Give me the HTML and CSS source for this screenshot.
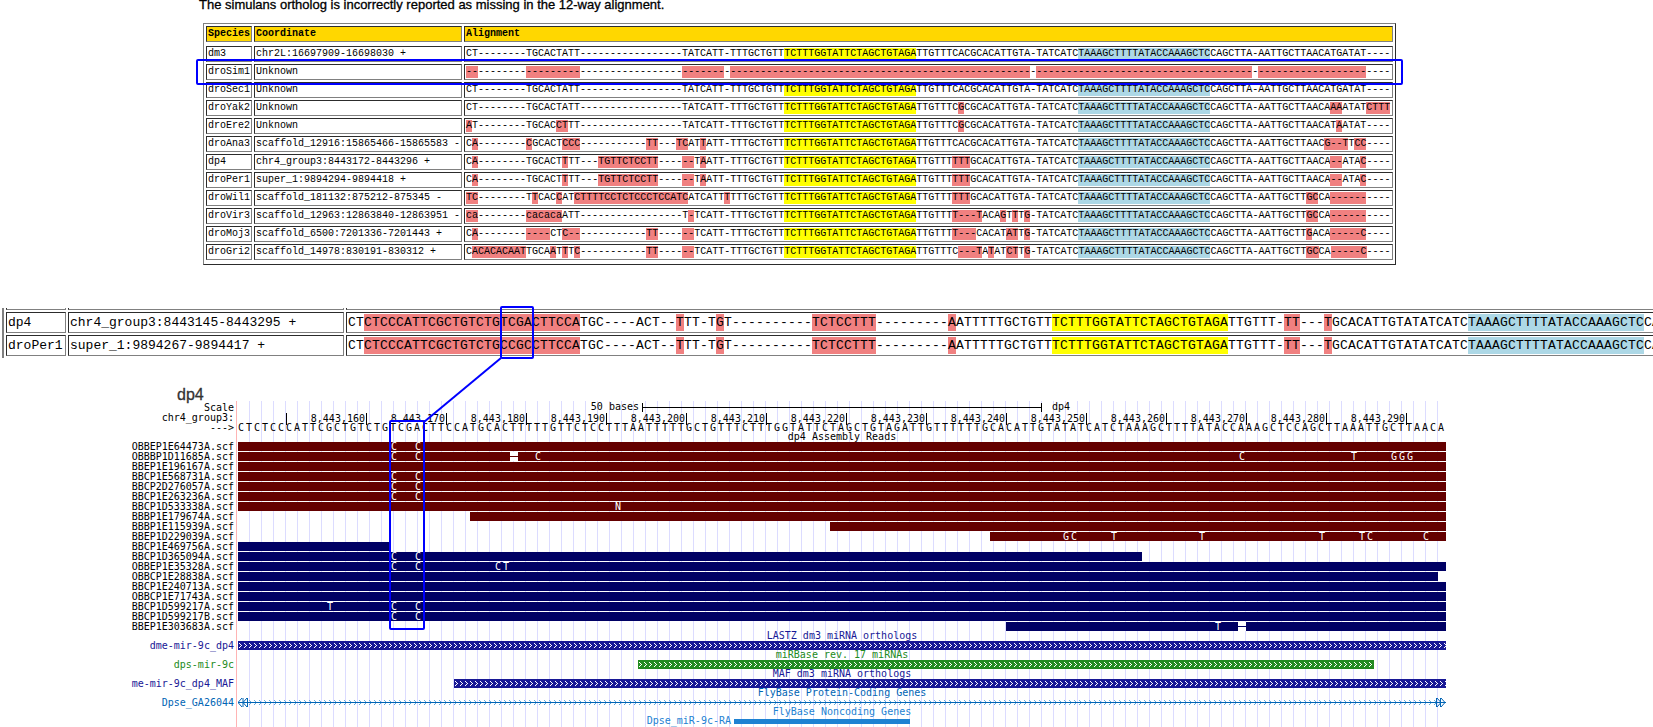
FILE: index.html
```html
<!DOCTYPE html>
<html lang="en">
<head>
    <meta charset="UTF-8">
    <meta name="viewport" content="width=device-width, initial-scale=1.0">
    <title>mir-9c alignment</title>
    <link rel="stylesheet" href="styles.css">
</head>
<body>
    <main class="figure">
        <p class="note">The simulans ortholog is incorrectly reported as missing in the 12-way alignment.</p>

        <table class="alignment">
            <thead>
                <tr><th>Species</th><th>Coordinate</th><th>Alignment</th></tr>
            </thead>
            <tbody id="alignmentRows"></tbody>
        </table>

        <div class="closeup">
            <table class="closeup-table">
                <tbody id="closeupRows">
                    <tr class="cut"><td></td><td></td><td></td></tr>
                </tbody>
            </table>
        </div>

        <h2 class="assembly">dp4</h2>
        <section class="browser" id="browser"></section>

        <!-- highlight boxes and the line that joins them -->
        <svg class="callouts" width="1420" height="640" fill="none" stroke="#0000ff" stroke-width="2">
            <rect x="197" y="60" width="1205" height="24" rx="1"/>
            <rect x="501" y="307" width="32" height="51" rx="1"/>
            <path d="M501 358L424 422"/>
            <rect x="390" y="421" width="34" height="208" rx="1"/>
        </svg>
    </main>
    <script src="script.js"></script>
</body>
</html>
```
FILE: styles.css
```css
* {
    box-sizing: border-box;
}

body {
    margin: 0;
    background-color: #fff;
    color: #000;
    font-family: "Liberation Sans", Arial, sans-serif;
}

.figure {
    position: relative;
}

.note {
    margin: 0 0 13px 199px;
    font-size: 13px;
    line-height: 10px;
    -webkit-text-stroke: 0.3px #000;
}

/* Alignment tables */
table {
    border-spacing: 2px;
    font-family: "Liberation Mono", "Courier New", monospace;
    white-space: pre;
}

td, th {
    border: 1px solid;
    border-color: #2c2c2c #808080 #808080 #2c2c2c;
    text-align: left;
}

mark {
    display: inline-block;
    vertical-align: top;
    color: #000;
    background-color: #f08080;
}

mark.mature {
    background-color: #ffff00;
}

mark.star {
    background-color: #add8e6;
}

.alignment {
    margin-left: 203px;
    padding-bottom: 2px;
    border: 1px solid;
    border-color: #808080 #2c2c2c #2c2c2c #808080;
    font-size: 10px;
    line-height: 12px;
}

.alignment td, .alignment th {
    padding: 1px;
}

.alignment th {
    background-color: #ffd700;
}

.alignment tbody::before {
    content: "";
    display: table-row;
}

.closeup {
    margin: 43px 0 0 2px;
    border-left: 2px solid #808080;
    overflow: hidden;
}

.closeup-table {
    margin-top: -2px;
    font-size: 13px;
    line-height: 17px;
}

.closeup-table td {
    padding: 1px;
}

.closeup-table td:nth-child(1) {
    min-width: 60px;
}

.closeup-table td:nth-child(2) {
    min-width: 276px;
}

.closeup-table .cut td {
    height: 2px;
    padding: 0;
    border-top: none;
}

.base {
    display: inline-block;
    width: 8px;
    text-align: center;
    vertical-align: top;
}

/* Genome browser */
.assembly {
    margin: 31px 0 0 177px;
    font-size: 16px;
    font-weight: normal;
    line-height: 12px;
    color: #333;
    -webkit-text-stroke: 0.3px #333;
}

.browser {
    margin-right: 207px;
    font-family: "DejaVu Sans Mono", monospace;
    font-size: 10px;
    line-height: 10px;
    white-space: pre;
}

.row {
    display: grid;
    grid-template-columns: 236px minmax(0, 1fr);
    height: 10px;
}

.row.scale {
    height: 12px;
}

.row.short {
    height: 9px;
}

.label {
    padding-right: 2px;
    text-align: right;
}

.scale .label {
    padding-top: 2px;
}

.track {
    display: grid;
    grid-template-columns: repeat(151, minmax(0, 1fr));
    padding-left: 1px;
    border-left: 1px solid #ffb4b4;
    background: repeating-linear-gradient(to right, transparent 0 11px, #dcdcff 11px 12px) content-box content-box;
}

.track > * {
    grid-row: 1;
}

.heading {
    grid-column: 1 / -1;
    text-align: center;
}

.scale-text {
    padding: 1px 7px 0 0;
    text-align: right;
}

.scale-bar {
    height: 9px;
    margin: 2px 4px 1px;
    border: solid #000;
    border-width: 0 1px;
    background: linear-gradient(#000, #000) center / 100% 1px no-repeat;
}

.scale-name {
    padding: 1px 0 0 6px;
}

.tick {
    display: flex;
    justify-content: flex-end;
    padding-right: 1px;
    border-left: 1px solid #000;
    line-height: 12px;
}

.bar {
    height: 9px;
    background-color: currentColor;
}

.bar.thin {
    height: 5px;
    margin-top: 2px;
}

.gap {
    height: 9px;
    background: linear-gradient(currentColor, currentColor) center / 100% 1px no-repeat #fff;
}

.mismatch {
    color: #fff;
    line-height: 9px;
    padding-left: 1px;
}

.arrows {
    display: block;
    width: 100%;
    height: 9px;
}

.gene {
    grid-column: 1 / -1;
    display: flex;
}

.gene svg {
    flex: none;
}

.gene .arrows {
    flex: 1;
    min-width: 0;
}

.beside {
    text-align: right;
    padding-right: 3px;
    line-height: 8px;
}

.maroon { color: #640000; }
.navy { color: #000064; }
.blue { color: #181896; }
.green { color: #228b22; }
.azure { color: #0064b4; }
.sky { color: #1e82d2; }

.callouts {
    position: absolute;
    top: 0;
    left: 0;
    pointer-events: none;
}
```
FILE: script.js
```js
// [..] differs from dm3, {..} mature miRNA, <..> star strand
const MATURE = '{TCTTTGGTATTCTAGCTGTAGA}';
const STAR = '<TAAAGCTTTTATACCAAAGCTC>';
const LOOP = 'TTTGCTGTT' + MATURE;
const TAIL = '-TATCATC' + STAR + 'CAGCTTA-';
const GAP = '-'.repeat(17);

const species = [
    ['dm3', 'chr2L:16697909-16698030 +', 'CT--------TGCACTATT' + GAP + 'TATCATT-' + LOOP + 'TTGTTTCACGCACATTGTA' + TAIL + 'AATTGCTTAACATGATAT----'],
    ['droSim1', 'Unknown', '[--]--------[---------]' + GAP + '[-------]-[' + '-'.repeat(50) + ']-[' + '-'.repeat(36) + ']-[' + '-'.repeat(18) + ']----'],
    ['droSec1', 'Unknown', 'CT--------TGCACTATT' + GAP + 'TATCATT-' + LOOP + 'TTGTTTCACGCACATTGTA' + TAIL + 'AATTGCTTAACATGATAT----'],
    ['droYak2', 'Unknown', 'CT--------TGCACTATT' + GAP + 'TATCATT-' + LOOP + 'TTGTTTC[G]CGCACATTGTA' + TAIL + 'AATTGCTTAACA[AA]ATAT[CTTT]'],
    ['droEre2', 'Unknown', '[A]T--------TGCAC[CT]TT' + GAP + 'TATCATT-' + LOOP + 'TTGTTTC[G]CGCACATTGTA' + TAIL + 'AATTGCTTAACAT[A]ATAT----'],
    ['droAna3', 'scaffold_12916:15865466-15865583 -', 'C[A]--------[C]GCACT[CCC]-----------[TT]---[TC]AT[T]ATT-' + LOOP + 'TTGTTTCACGCACATTGTA' + TAIL + 'AATTGCTTAAC[G--T]T[CC]----'],
    ['dp4', 'chr4_group3:8443172-8443296 +', 'C[A]--------TGCACT[T]TT---[TGTTCTCCTT]----[--]T[A]ATT-' + LOOP + 'TTGTTT[TTT]GCACATTGTA' + TAIL + 'AATTGCTTAACA[--]ATA[C]----'],
    ['droPer1', 'super_1:9894294-9894418 +', 'C[A]--------TGCACT[T]TT---[TGTTCTCCTT]----[--]T[A]ATT-' + LOOP + 'TTGTTT[TTT]GCACATTGTA' + TAIL + 'AATTGCTTAACA[--]ATA[C]----'],
    ['droWil1', 'scaffold_181132:875212-875345 -', '[TC]--------T[T]CAC[C]AT[CTTTTCCTCTCCCTCCATC]ATCATT[T]' + LOOP + 'TTGTTT[TTT]GCACATTGTA' + TAIL + 'AATTGCTT[GC]CA[------]----'],
    ['droVir3', 'scaffold_12963:12863840-12863951 -', '[ca]--------[cacaca]ATT' + GAP + 'T[-]TCATT-' + LOOP + 'TTGTTT[T---T]ACA[G]T[T]T[G]' + TAIL + 'AATTGCTT[GC]CA[------]----'],
    ['droMoj3', 'scaffold_6500:7201336-7201443 +', 'C[A]--------[----]CT[C--]-----------[TT]----[--]TCATT-' + LOOP + 'TTGTTT[T---]CACAT[AT]T[G]' + TAIL + 'AATTGCTT[G]ACA[-----C]----'],
    ['droGri2', 'scaffold_14978:830191-830312 +', 'C[ACACACAAT]TGCA[A]T[T]T[C]-----------[TT]----[--]TCATT-' + LOOP + 'TTGTTTC[---T]A[T]AT[CT]T[G]' + TAIL + 'AATTGCTT[GC]CA[-----C]----']
];

const closeupTail = 'TGC----ACT--[T]TT-T[G]T----------[TCTCCTTT]---------[A]ATTTTTGCTGTT' + MATURE + 'TTGTTT-[TT]---[T]GCACATTGTATATCATC' + STAR + 'CA';
const closeup = [
    ['dp4', 'chr4_group3:8443145-8443295 +', 'CT[CTCCCATTCGCTGTCTGTCGACTTCCA]' + closeupTail],
    ['droPer1', 'super_1:9894267-9894417 +', 'CT[CTCCCATTCGCTGTCTGCCGCCTTCCA]' + closeupTail]
];

const OPEN = { '[': '<mark>', '{': '<mark class="mature">', '<': '<mark class="star">' };

function paint(text, spaced) {
    return [...text].map(c => {
        if (OPEN[c]) return OPEN[c];
        if (']}>'.includes(c)) return '</mark>';
        return spaced ? `<span class="base">${c}</span>` : c;
    }).join('');
}

function tableRows(rows, spaced) {
    return rows.map(([name, pos, seq]) =>
        `<tr><td>${name}</td><td>${pos}</td><td>${paint(seq, spaced)}</td></tr>`).join('');
}

document.getElementById('alignmentRows').innerHTML = tableRows(species, false);
document.getElementById('closeupRows').insertAdjacentHTML('beforeend', tableRows(closeup, true));

// Genome browser: columns are bases, 0 to 151
const BASES = 151;
const genome = 'CTCTCCCATTCGCTGTCTGTCGACTTCCATGCACTTTTTGTTCTCCTTTAATTTTTGCTGTTTCTTTGGTATTCTAGCTGTAGATTGTTTTTTGCACATTGTATATCATCTAAAGCTTTTATACCAAAGCTCCAGCTTAAATTGCTTAACA';

// name, colour, start, end, mismatches, gap
const reads = [
    ['OBBEP1E64473A', 'maroon', 0, 151, { 19: 'C', 22: 'C' }],
    ['OBBBP1D11685A', 'maroon', 0, 151, { 19: 'C', 22: 'C', 37: 'C', 125: 'C', 139: 'T', 144: 'G', 145: 'G', 146: 'G' }, 34],
    ['BBEP1E196167A', 'maroon', 0, 151, {}],
    ['BBCP1E568731A', 'maroon', 0, 151, { 19: 'C', 22: 'C' }],
    ['BBCP2D276057A', 'maroon', 0, 151, { 19: 'C', 22: 'C' }],
    ['BBCP1E263236A', 'maroon', 0, 151, { 19: 'C', 22: 'C' }],
    ['BBCP1D533338A', 'maroon', 0, 151, { 47: 'N' }],
    ['BBBP1E179674A', 'maroon', 29, 151, {}],
    ['BBBP1E115939A', 'maroon', 74, 151, {}],
    ['BBEP1D229039A', 'maroon', 94, 151, { 103: 'G', 104: 'C', 109: 'T', 120: 'T', 135: 'T', 140: 'T', 141: 'C', 148: 'C' }],
    ['BBCP1E469756A', 'navy', 0, 19, {}],
    ['BBCP1D365094A', 'navy', 0, 113, { 19: 'C', 22: 'C' }],
    ['OBBEP1E35328A', 'navy', 0, 151, { 19: 'C', 22: 'C', 32: 'C', 33: 'T' }],
    ['OBBCP1E28838A', 'navy', 0, 150, {}],
    ['BBCP1E240713A', 'navy', 0, 151, {}],
    ['OBBCP1E71743A', 'navy', 0, 151, {}],
    ['BBCP1D599217A', 'navy', 0, 151, { 11: 'T', 19: 'C', 22: 'C' }],
    ['BBCP1D599217B', 'navy', 0, 151, { 19: 'C', 22: 'C' }],
    ['BBEP1E303683A', 'navy', 96, 151, { 122: 'T' }, 125]
];

const row = (label, track, cls = '') =>
    `<div class="row ${cls}"><div class="label">${label}</div><div class="track">${track}</div></div>`;

const span = (start, end, cls, content = '') =>
    `<span class="${cls}" style="grid-column: ${start + 1} / ${end + 1}">${content}</span>`;

const heading = (text, cls = '') => row('', `<span class="heading">${text}</span>`, cls);

function arrows(id, color) {
    return `<svg class="arrows"><defs><pattern id="${id}" width="5" height="9" patternUnits="userSpaceOnUse">
        <path d="M1 2h1v1h1v1h1v1h-1v1h-1v1h-1v-1h1v-1h1v-1h-1v-1h-1z" fill="${color}"/></pattern></defs>
        <rect width="100%" height="9" fill="url(#${id})"/></svg>`;
}

function ruler() {
    let html = '';
    for (let at = 6, pos = 8443160; at < BASES; at += 10, pos += 10) {
        html += span(at, Math.min(at + 10, BASES), 'tick', at + 10 < BASES ? pos.toLocaleString('en-US') : '');
    }
    return html;
}

function read([name, color, start, end, bases, gap]) {
    let html = span(start, end, 'bar ' + color);
    if (gap) html += span(gap, gap + 1, 'gap ' + color);
    for (const at in bases) html += span(+at, +at + 1, 'mismatch', bases[at]);
    return row(name + '.scf', html);
}

const gene = `<div class="gene">
<svg width="10" height="9" fill="none" stroke="currentColor"><path d="M4 0L0 4.500L4 9M9 0L5 4.500L9 9M9.500 0V9M5 0V9M0 4.500H10"/></svg>
<svg class="arrows"><defs><pattern id="geneArrows" width="5" height="9" patternUnits="userSpaceOnUse">
<path d="M1 2h1v1h1v3h-1v1h-1v-1h1v-3h-1z" fill="#64aadc"/></pattern></defs>
<rect width="100%" height="9" fill="url(#geneArrows)"/><rect y="4" width="100%" height="1" fill="currentColor"/></svg>
<svg width="10" height="9" fill="none" stroke="currentColor"><path d="M0.500 0V9M1 0L5 4.500L1 9M4.500 0V9M5 0L9 4.500L5 9M0 4.500H10"/></svg>
</div>`.replace(/\n/g, '');

document.getElementById('browser').innerHTML = [
    row('Scale', span(35, 51, 'scale-text', '50 bases') + span(50, 101, 'scale-bar') + span(101, 111, 'scale-name', 'dp4'), 'scale'),
    row('chr4_group3:', ruler()),
    row('---&gt;', [...genome].map(b => `<span>${b}</span>`).join(''), 'short'),
    heading('dp4 Assembly Reads'),
    ...reads.slice(0, -1).map(read),
    read(reads[reads.length - 1]).replace('class="row ', 'class="row short'),
    heading('LASTZ dm3 miRNA orthologs', 'blue'),
    row('dme-mir-9c_dp4', span(0, 151, 'bar') + span(0, 151, '', arrows('lastz', '#fff')), 'short blue'),
    heading('miRBase rev. 17 miRNAs', 'green'),
    row('dps-mir-9c', span(50, 142, 'bar') + span(50, 142, '', arrows('mirbase', '#fff')), 'short green'),
    heading('MAF dm3 miRNA orthologs', 'blue'),
    row('me-mir-9c_dp4_MAF', span(27, 151, 'bar') + span(27, 151, '', arrows('maf', '#fff')), 'short blue'),
    heading('FlyBase Protein-Coding Genes', 'azure'),
    row('Dpse_GA26044', gene, 'short azure'),
    heading('FlyBase Noncoding Genes', 'sky'),
    row('', span(40, 62, 'beside', 'Dpse_miR-9c-RA') + span(62, 84, 'bar thin'), 'sky')
].join('');
```
